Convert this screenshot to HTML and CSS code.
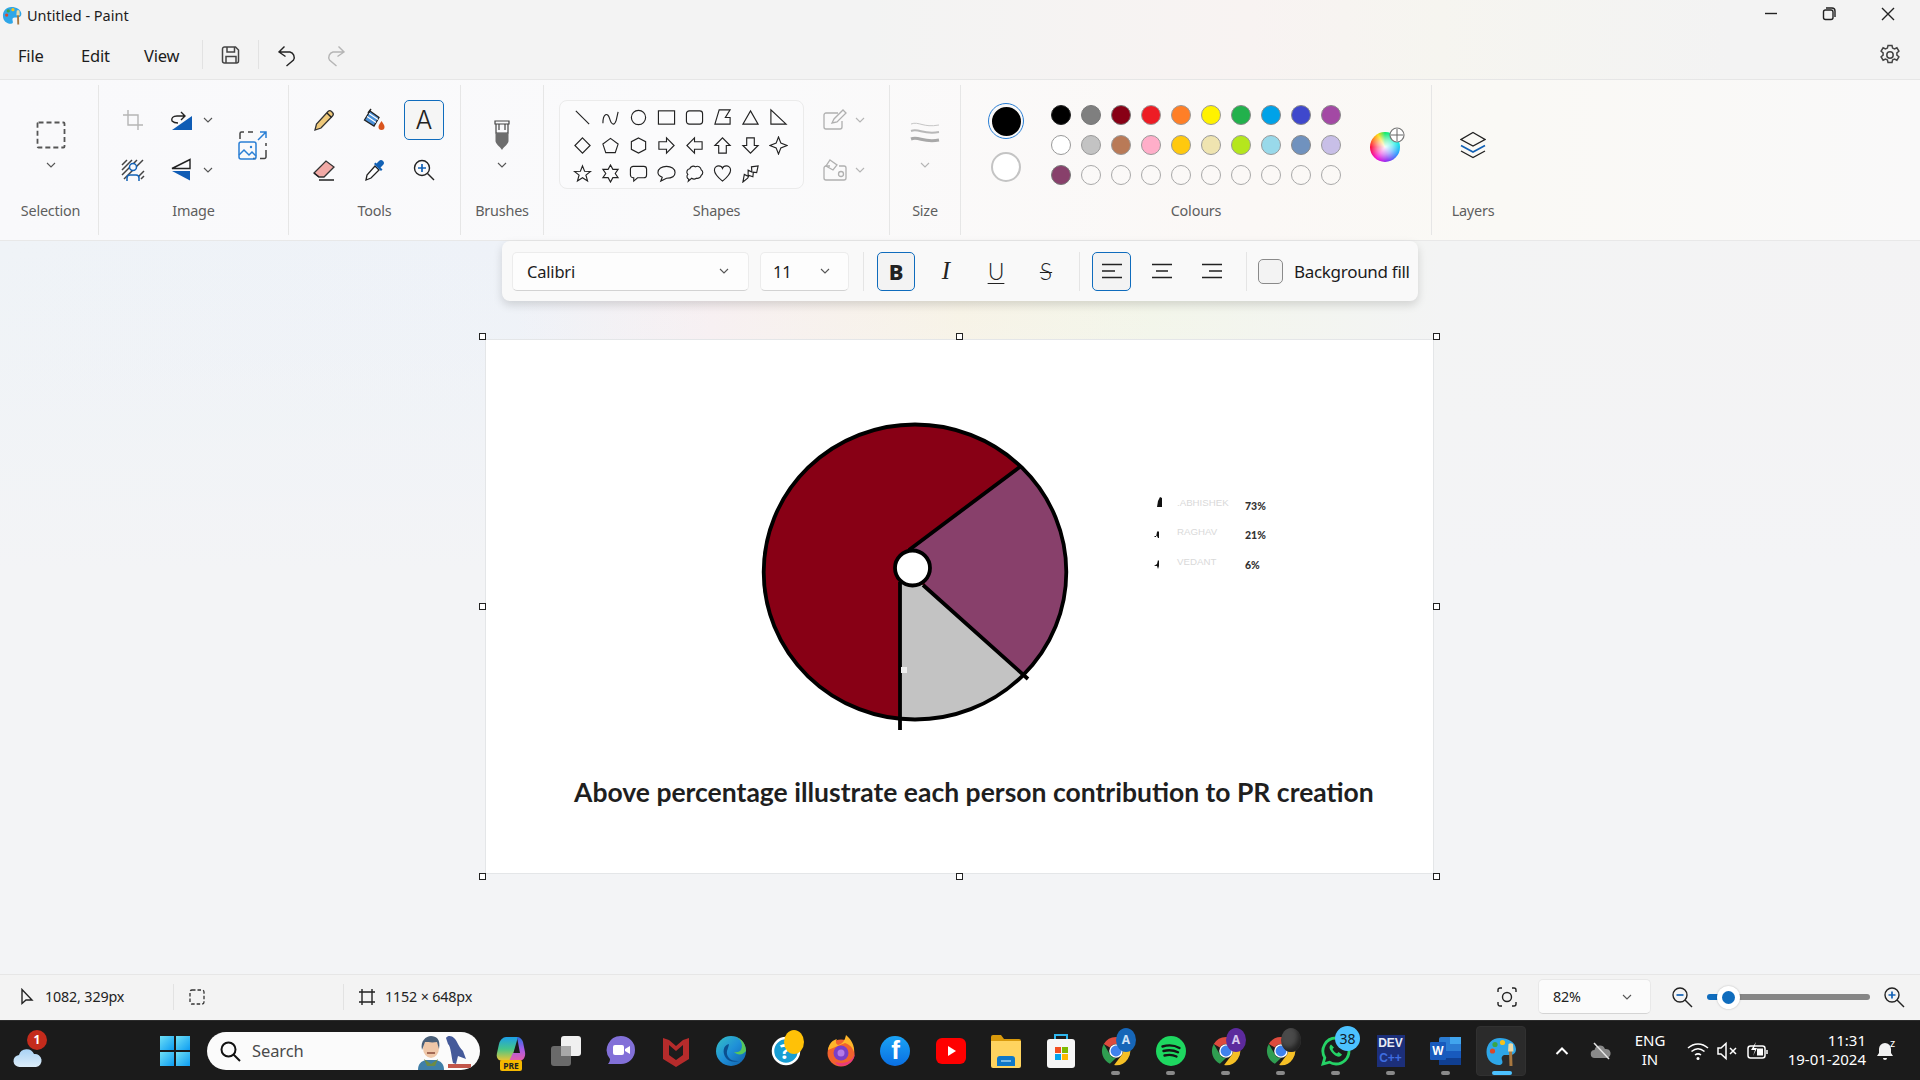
FILE: index.html
```html
<!DOCTYPE html>
<html lang="en">
<head>
<meta charset="utf-8">
<title>Untitled - Paint</title>
<link rel="stylesheet" href="styles.css">
</head>
<body>
<svg class="defs" width="0" height="0" aria-hidden="true">
  <defs>
    <symbol id="palette" viewBox="0 0 32 32">
      <path d="M15 3C7 3 1.500 9 1.500 17c0 8 6 13 12.500 13 3.500 0 4-2.500 3-5-1-3 .5-5 3.500-5h4c4 0 6.500-2 6.500-6C30.500 7 23 3 15 3z" fill="#2ea6e8"/>
      <circle cx="7.500" cy="16" r="2.600" fill="#d9482b"/>
      <circle cx="10" cy="9.500" r="2.600" fill="#3aa648"/>
      <circle cx="17.500" cy="7.500" r="2.600" fill="#f5c21b"/>
      <path d="M24 16h3l.5 15h-3z" fill="#a9783f"/>
      <path d="M23.500 9c1.500-1 3-1 4.500 0l.5 7.500h-5.500z" fill="#e9d9a8"/>
    </symbol>
    <symbol id="chrome" viewBox="0 0 32 32">
      <path d="M16 1a15 15 0 0 1 13 7.500H16a7.500 7.500 0 0 0-6.500 3.750L3 8.500A15 15 0 0 1 16 1z" fill="#dd4b3e"/>
      <path d="M3 8.500l6.500 11.250A7.500 7.500 0 0 0 16 23.500L9.500 29.500A15 15 0 0 1 3 8.500z" fill="#2f9e51"/>
      <path d="M29 8.500A15 15 0 0 1 14 31l8.500-11.250A7.500 7.500 0 0 0 22.500 12z" fill="#f6c026"/>
      <circle cx="16" cy="16" r="6.500" fill="#3f82ee" stroke="#fff" stroke-width="1.500"/>
    </symbol>
    <linearGradient id="winGrad" x1="0" y1="0" x2="1" y2="1">
      <stop offset="0" stop-color="#6fe0f5"/><stop offset="1" stop-color="#0d9cf2"/>
    </linearGradient>
    <linearGradient id="cloudGrad" x1="0" y1="0" x2="0" y2="1">
      <stop offset="0" stop-color="#a9d3f5"/><stop offset="1" stop-color="#dcecf8"/>
    </linearGradient>
    <linearGradient id="edgeGrad" x1="0" y1="0" x2="1" y2="1">
      <stop offset="0" stop-color="#35c1c4"/><stop offset=".5" stop-color="#1f8fd8"/><stop offset="1" stop-color="#0f5ea8"/>
    </linearGradient>
    <linearGradient id="copGradA" x1="0" y1="0" x2="0" y2="1">
      <stop offset="0" stop-color="#1c9fe8"/><stop offset=".5" stop-color="#45c58a"/><stop offset="1" stop-color="#f2c531"/>
    </linearGradient>
    <linearGradient id="copGradB" x1="0" y1="0" x2="0" y2="1">
      <stop offset="0" stop-color="#2a6fe0"/><stop offset=".5" stop-color="#a55be8"/><stop offset="1" stop-color="#e85fa8"/>
    </linearGradient>
  </defs>
</svg>

<div class="app">
  <header class="titlebar">
    <svg class="title-icon" width="20" height="20"><use href="#palette"/></svg>
    <span class="title-text">Untitled - Paint</span>
    <div class="winctrls">
      <svg class="winbtn" width="58" height="28" viewBox="0 0 58 28"><path d="M22 13.500h12" class="ln-dark"/></svg>
      <svg class="winbtn" width="58" height="28" viewBox="0 0 58 28"><rect x="22.500" y="10" width="9.500" height="9.500" rx="2" class="ln-dark"/><path d="M25 8h6a3 3 0 0 1 3 3v6" class="ln-dark"/></svg>
      <svg class="winbtn" width="58" height="28" viewBox="0 0 58 28"><path d="M23 8l12 12M35 8L23 20" class="ln-dark"/></svg>
    </div>
  </header>

  <nav class="menubar">
    <div class="menu-list">
      <span class="menu-item">File</span>
      <span class="menu-item">Edit</span>
      <span class="menu-item">View</span>
    </div>
    <span class="menu-sep"></span>
    <span class="menu-btn menu-btn-save">
      <svg width="22" height="22" viewBox="0 0 22 22"><path d="M4.500 3h11l3 3v11a2 2 0 0 1-2 2h-12a2 2 0 0 1-2-2V5a2 2 0 0 1 2-2z" class="ln-mid"/><path d="M7 3v5h7.500V3M6 19v-6.500h10V19" class="ln-mid"/></svg>
    </span>
    <span class="menu-sep"></span>
    <span class="menu-btn menu-btn-undo">
      <svg width="24" height="24" viewBox="0 0 24 24"><path d="M5 9h10a5.500 5.500 0 0 1 3.500 8l-7 6M9.500 3.500L4 9l6.500 4.500" class="ln-dark"/></svg>
    </span>
    <span class="menu-btn menu-btn-redo">
      <svg width="24" height="24" viewBox="0 0 24 24"><path d="M19 9H9a5.500 5.500 0 0 0-3.500 8l7 6M14.500 3.500L20 9l-6.500 4.500" class="ln-off"/></svg>
    </span>
    <svg class="gear" width="24" height="24" viewBox="0 0 24 24"><path d="M10 2.500h4l.6 2.600 1.900.9 2.400-1.200 2 3.400-2 1.700v2.200l2 1.700-2 3.400-2.400-1.200-1.900.9-.6 2.600h-4l-.6-2.600-1.900-.9-2.400 1.200-2-3.400 2-1.700V9.900l-2-1.700 2-3.400 2.400 1.200 1.900-.9z" class="ln-mid"/><circle cx="12" cy="12" r="3.200" class="ln-mid"/></svg>
  </nav>

  <section class="ribbon">
    <div class="group group-selection">
      <div class="body stack">
        <svg class="stack-icon" width="30" height="28" viewBox="0 0 30 28"><rect x="1.500" y="1.500" width="27" height="25" rx="1" class="ln-dash"/></svg>
        <svg class="chev stack-chev" width="12" height="8" viewBox="0 0 12 8"><path d="M2 2l4 4 4-4"/></svg>
      </div>
      <div class="label">Selection</div>
    </div>

    <div class="group group-image">
      <div class="body image-grid">
        <span class="cell"><svg width="24" height="24" viewBox="0 0 24 24"><path d="M7 2v15h15M2 7h15v15" class="ln-off"/></svg></span>
        <span class="cell-split">
          <svg width="26" height="24" viewBox="0 0 26 24"><path d="M2 22h20V8z" fill="#0f5cb5"/><path d="M2 13c-1-3 1-5 5-5h8M11 4l4 4-4 4M2 13c2 2 4 2 6 2" class="ln-dark"/></svg>
          <svg class="chev" width="12" height="8" viewBox="0 0 12 8"><path d="M2 2l4 4 4-4"/></svg>
        </span>
        <span class="cell cell-resize">
          <svg width="30" height="30" viewBox="0 0 30 30"><path d="M2 9V3.500A1.500 1.500 0 0 1 3.500 2H6M10 2h5M28 20v7a1.500 1.500 0 0 1-1.500 1.500H22M18 28.500h-3M28 16v-3" class="ln-dash2"/><rect x="1" y="12" width="17" height="17" rx="2" class="ln-blue"/><path d="M1 25l5-5 5 5 3-3 4 4" class="ln-blue"/><circle cx="13" cy="17" r="1.200" fill="#2a7fd5"/><path d="M20 10l8-8M22 2h6v6" class="ln-blue"/></svg>
        </span>
        <span class="cell"><svg width="24" height="24" viewBox="0 0 24 24"><path d="M1 7l5-5M1 12L11 2M1 17L16 2M3 21L22 2M15 21l8-8M20 21l3-3" class="ln-hatch"/><circle cx="12" cy="9" r="3.500" fill="#f9f9fb" stroke="#1261b5" stroke-width="1.500"/><path d="M6 23v-3a3 3 0 0 1 3-3h6a3 3 0 0 1 3 3v3" fill="#f9f9fb" stroke="#1261b5" stroke-width="1.500"/></svg></span>
        <span class="cell-split">
          <svg width="26" height="24" viewBox="0 0 26 24"><path d="M20 1.500V10.500H2z" class="ln-dark"/><path d="M20 22.500V13H2z" fill="#0f5cb5"/></svg>
          <svg class="chev" width="12" height="8" viewBox="0 0 12 8"><path d="M2 2l4 4 4-4"/></svg>
        </span>
      </div>
      <div class="label">Image</div>
    </div>

    <div class="group group-tools">
      <div class="body tool-grid">
        <span class="cell"><svg width="24" height="24" viewBox="0 0 24 24"><path d="M3 22l1.500-6L16 3.500a2.500 2.500 0 0 1 3.500 0l1 1a2.500 2.500 0 0 1 0 3.500L9 20z" fill="#efc97a" stroke="#333" stroke-width="1.300"/><path d="M15 5l4.500 4.500" class="ln-dark"/></svg></span>
        <span class="cell"><svg width="24" height="24" viewBox="0 0 24 24"><path d="M8 3l9 6.500-5 8.500-9.500-6z" fill="#4a90d8" stroke="#222" stroke-width="1.300"/><path d="M7 5.500l9 6M5 8.500l9 6" stroke="#fff" stroke-width="1.200"/><path d="M6 5L9 1" class="ln-dark"/><path d="M19.500 13c2 3 3 4.500 3 6a3 3 0 0 1-6 0c0-1.500 1-3 3-6z" fill="#d9541e"/></svg></span>
        <span class="cell"><span class="tool-active">A</span></span>
        <span class="cell"><svg width="24" height="24" viewBox="0 0 24 24"><path d="M2 15L14 3l8 6-10 10H7z" fill="#f2aaa6" stroke="#333" stroke-width="1.300"/><path d="M2 15l5 4M7 22h15" class="ln-dark"/></svg></span>
        <span class="cell"><svg width="24" height="24" viewBox="0 0 24 24"><path d="M4 22l1-5L13 8l4 4-8 8z" fill="#fff" stroke="#222" stroke-width="1.300"/><path d="M12 6l7 7 1.500-1.500-2-2 2.500-2.500a2.800 2.800 0 0 0-4-4l-2.500 2.500-1-1z" fill="#1261b5"/></svg></span>
        <span class="cell"><svg width="24" height="24" viewBox="0 0 24 24"><circle cx="10" cy="10" r="7.500" class="ln-dark"/><path d="M15.500 15.500L22 22" class="ln-dark"/><path d="M6 10h8M10 6v8" class="ln-blue2"/></svg></span>
      </div>
      <div class="label">Tools</div>
    </div>

    <div class="group group-brushes">
      <div class="body stack">
        <svg class="stack-icon-b" width="20" height="32" viewBox="0 0 20 32"><path d="M3 2h14v3H3zM4 5h12v9H4z" fill="#f9f9fb" stroke="#444" stroke-width="1.200"/><path d="M3.500 14h13v8c0 3-4 5-6.500 9-2.500-4-6.500-6-6.500-9z" fill="#6d6d6d"/><path d="M7 5v6M13 5v6" stroke="#444" stroke-width="1.200"/></svg>
        <svg class="chev stack-chev-b" width="12" height="8" viewBox="0 0 12 8"><path d="M2 2l4 4 4-4"/></svg>
      </div>
      <div class="label">Brushes</div>
    </div>

    <div class="group group-shapes">
      <div class="body shapes-row">
        <div class="shape-box">
          <svg class="shape" viewBox="0 0 20 20"><path d="M3 3l14 14"/></svg>
          <svg class="shape" viewBox="0 0 20 20"><path d="M2 16C2 6 7 4 9 11s5 8 7 2l2-9"/></svg>
          <svg class="shape" viewBox="0 0 20 20"><circle cx="10" cy="10" r="7.500"/></svg>
          <svg class="shape" viewBox="0 0 20 20"><rect x="1.500" y="3" width="17" height="14"/></svg>
          <svg class="shape" viewBox="0 0 20 20"><rect x="1.500" y="3" width="17" height="14" rx="3"/></svg>
          <svg class="shape" viewBox="0 0 20 20"><path d="M2 17L6.500 2H18l-5 8h5v7z"/></svg>
          <svg class="shape" viewBox="0 0 20 20"><path d="M10 3l8 14H2z"/></svg>
          <svg class="shape" viewBox="0 0 20 20"><path d="M2 2v15h16z"/></svg>
          <svg class="shape" viewBox="0 0 20 20"><path d="M10 2l8 8-8 8-8-8z"/></svg>
          <svg class="shape" viewBox="0 0 20 20"><path d="M10 2.500l8 6-3 9H5l-3-9z"/></svg>
          <svg class="shape" viewBox="0 0 20 20"><path d="M10 2l7.500 4v8L10 18l-7.500-4V6z"/></svg>
          <svg class="shape" viewBox="0 0 20 20"><path d="M2 6h8V2l8 8-8 8v-4H2z"/></svg>
          <svg class="shape" viewBox="0 0 20 20"><path d="M18 6h-8V2l-8 8 8 8v-4h8z"/></svg>
          <svg class="shape" viewBox="0 0 20 20"><path d="M6 18v-8H2l8-8 8 8h-4v8z"/></svg>
          <svg class="shape" viewBox="0 0 20 20"><path d="M6 2v8H2l8 8 8-8h-4V2z"/></svg>
          <svg class="shape" viewBox="0 0 20 20"><path d="M10 1l2.500 6.500L19 10l-6.500 2.500L10 19l-2.500-6.500L1 10l6.500-2.500z"/></svg>
          <svg class="shape" viewBox="0 0 20 20"><path d="M10 2l2.200 5.600 6.300.3-4.900 3.800 1.700 6.100L10 14.400l-5.300 3.400 1.700-6.100L1.500 7.900l6.300-.3z"/></svg>
          <svg class="shape" viewBox="0 0 20 20"><path d="M10 1l2.500 4.600H18L15 10l3 4.400h-5.500L10 19l-2.500-4.600H2L5 10 2 5.600h5.500z"/></svg>
          <svg class="shape" viewBox="0 0 20 20"><path d="M4.500 2.500h11a3 3 0 0 1 3 3v6a3 3 0 0 1-3 3H9L5 18v-3.500h-.5a3 3 0 0 1-3-3v-6a3 3 0 0 1 3-3z"/></svg>
          <svg class="shape" viewBox="0 0 20 20"><path d="M10 2.500c5 0 9 2.500 9 6.500s-4 6-9 6l-6 3 1.500-4C3 13 1 11.500 1 9c0-4 4-6.500 9-6.500z"/></svg>
          <svg class="shape" viewBox="0 0 20 20"><path d="M4 16a3 3 0 0 1-1-5 3.500 3.500 0 0 1 2-6 4 4 0 0 1 6-2 4 4 0 0 1 6 3 3.500 3.500 0 0 1 0 6 4 4 0 0 1-5 3 4 4 0 0 1-5 0l-3.500 3z"/></svg>
          <svg class="shape" viewBox="0 0 20 20"><path d="M10 18C4 13 1.500 10 1.500 6.500 1.500 3.500 4 2 6 2c2 0 3.500 1 4 2.500C10.500 3 12 2 14 2c2 0 4.500 1.500 4.500 4.500C18.500 10 16 13 10 18z"/></svg>
          <svg class="shape" viewBox="0 0 20 20"><path d="M2 19l1.500-8 4 2L7.500 6.500l4 2L11 3l7-1-1.500 7-3.500-.5-.5 5-4-1.500-1.500 3z"/></svg>
        </div>
        <div class="shape-opts">
          <span class="opt">
            <svg width="26" height="24" viewBox="0 0 26 24"><path d="M16 5H4a2 2 0 0 0-2 2v12a2 2 0 0 0 2 2h14a2 2 0 0 0 2-2v-6" class="ln-off2"/><path d="M10 15l2-4 9-9 3 3-9 9z" class="ln-off2"/></svg>
            <svg class="chev chev-off" width="12" height="8" viewBox="0 0 12 8"><path d="M2 2l4 4 4-4"/></svg>
          </span>
          <span class="opt">
            <svg width="26" height="24" viewBox="0 0 26 24"><path d="M8 8H4a2 2 0 0 0-2 2v10a2 2 0 0 0 2 2h18a2 2 0 0 0 2-2V10a2 2 0 0 0-2-2h-5" class="ln-off2"/><path d="M8 2l7 5-4 5-7-4z" class="ln-off2"/><circle cx="19" cy="16" r="2.500" class="ln-off2"/></svg>
            <svg class="chev chev-off" width="12" height="8" viewBox="0 0 12 8"><path d="M2 2l4 4 4-4"/></svg>
          </span>
        </div>
      </div>
      <div class="label">Shapes</div>
    </div>

    <div class="group group-size">
      <div class="body stack">
        <svg class="stack-icon-s" width="30" height="24" viewBox="0 0 30 24"><path d="M1 3c8-3 12 4 28 1" class="ln-s1"/><path d="M1 10c8-3 12 4 28 1" class="ln-s2"/><path d="M1 18c8-3 12 4 28 1" class="ln-s3"/></svg>
        <svg class="chev chev-off stack-chev-s" width="12" height="8" viewBox="0 0 12 8"><path d="M2 2l4 4 4-4"/></svg>
      </div>
      <div class="label">Size</div>
    </div>

    <div class="group group-colours">
      <div class="body colours-row">
        <div class="current-col">
          <span class="current-ring"><span class="current-black"></span></span>
          <span class="current-white"></span>
        </div>
        <div class="swatches">
          <span class="sw sw-black"></span><span class="sw sw-gray"></span><span class="sw sw-maroon"></span><span class="sw sw-red"></span><span class="sw sw-orange"></span><span class="sw sw-yellow"></span><span class="sw sw-green"></span><span class="sw sw-cyan"></span><span class="sw sw-indigo"></span><span class="sw sw-purple"></span>
          <span class="sw sw-white"></span><span class="sw sw-silver"></span><span class="sw sw-brown"></span><span class="sw sw-pink"></span><span class="sw sw-gold"></span><span class="sw sw-cream"></span><span class="sw sw-lime"></span><span class="sw sw-sky"></span><span class="sw sw-steel"></span><span class="sw sw-lav"></span>
          <span class="sw sw-plum"></span><span class="sw"></span><span class="sw"></span><span class="sw"></span><span class="sw"></span><span class="sw"></span><span class="sw"></span><span class="sw"></span><span class="sw"></span><span class="sw"></span>
        </div>
        <div class="wheel">
          <span class="wheel-disc"></span>
          <svg class="wheel-plus" width="16" height="16" viewBox="0 0 16 16"><circle cx="8" cy="8" r="7" fill="#fff" stroke="#777" stroke-width="1.200"/><path d="M8 2v12M2 8h12" stroke="#666" stroke-width="1"/></svg>
        </div>
      </div>
      <div class="label">Colours</div>
    </div>

    <div class="group group-layers">
      <div class="body center-body">
        <svg width="26" height="28" viewBox="0 0 26 28"><path d="M13 1.500L25 8.500 13 15 1 8.500z" class="ln-dark"/><path d="M1 14.500L13 21l12-6.500" class="ln-blue2"/><path d="M1 20L13 26.500 25 20" class="ln-dark"/></svg>
      </div>
      <div class="label">Layers</div>
    </div>
  </section>

  <main class="workspace">
    <div class="text-toolbar">
      <div class="dropdown dropdown-font"><span>Calibri</span><svg class="chev" width="12" height="8" viewBox="0 0 12 8"><path d="M2 2l4 4 4-4"/></svg></div>
      <div class="dropdown dropdown-size"><span>11</span><svg class="chev" width="12" height="8" viewBox="0 0 12 8"><path d="M2 2l4 4 4-4"/></svg></div>
      <span class="tb-sep tb-sep-a"></span>
      <span class="fmt fmt-on fmt-b">B</span>
      <span class="fmt fmt-i">I</span>
      <span class="fmt fmt-u">U</span>
      <span class="fmt fmt-s">S</span>
      <span class="tb-sep tb-sep-b"></span>
      <span class="fmt fmt-on fmt-al">
        <svg width="20" height="18" viewBox="0 0 20 18"><path d="M0 2.500h20M0 9h13M0 15.500h20" class="ln-dark"/></svg>
      </span>
      <span class="fmt fmt-al">
        <svg width="20" height="18" viewBox="0 0 20 18"><path d="M0 2.500h20M4 9h12M0 15.500h20" class="ln-dark"/></svg>
      </span>
      <span class="fmt fmt-al">
        <svg width="20" height="18" viewBox="0 0 20 18"><path d="M0 2.500h20M7 9h13M0 15.500h20" class="ln-dark"/></svg>
      </span>
      <span class="tb-sep tb-sep-c"></span>
      <span class="checkbox"></span>
      <span class="tb-label">Background fill</span>
    </div>

    <div class="canvas">
      <svg class="artwork" width="947" height="533" viewBox="486 340 947 533">
        <ellipse cx="915" cy="572" rx="151.300" ry="147.500" fill="#880015"/>
        <path d="M909 552L1020 466A151.300 147.500 0 0 1 1025 675L926 586z" fill="#88406b"/>
        <path d="M900 575V719A151.300 147.500 0 0 0 1025 675L923 585z" fill="#c3c3c3"/>
        <ellipse cx="915" cy="572" rx="151.300" ry="147.500" class="art-line"/>
        <path d="M909 550L1021 466M923 585L1028 679M900 582V730" class="art-line"/>
        <circle cx="912.500" cy="568" r="17.500" fill="#fff" class="art-line-3"/>
        <rect x="901" y="667" width="6" height="6" fill="#eeeeee"/>
        <path d="M1157 507l1-6 2-4 2 1v9z" fill="#111"/>
        <path d="M1154 537h2l1-5 1-1 1 1v6h-1l-1-2h-2z" fill="#111"/>
        <path d="M1154 566l3-2 1-4 1 1v5l-1 3-1-3z" fill="#111"/>
      </svg>
      <span class="legend-name legend-a">.ABHISHEK</span><span class="legend-val legend-va">73%</span>
      <span class="legend-name legend-b">RAGHAV</span><span class="legend-val legend-vb">21%</span>
      <span class="legend-name legend-c">VEDANT</span><span class="legend-val legend-vc">6%</span>
      <span class="art-heading">Above percentage illustrate each person contribution to PR creation</span>
      <span class="handle h-tl"></span><span class="handle h-tc"></span><span class="handle h-tr"></span>
      <span class="handle h-ml"></span><span class="handle h-mr"></span>
      <span class="handle h-bl"></span><span class="handle h-bc"></span><span class="handle h-br"></span>
    </div>
  </main>

  <footer class="statusbar">
    <div class="seg seg-pos">
      <svg width="16" height="18" viewBox="0 0 16 18"><path d="M3 1.500v14l4-3.500 6 0z" class="ln-dark"/></svg>
      <span>1082, 329px</span>
    </div>
    <div class="seg seg-sel">
      <svg width="16" height="16" viewBox="0 0 16 16"><rect x="1" y="1" width="14" height="14" rx="2" class="ln-dash3"/></svg>
    </div>
    <div class="seg seg-size">
      <svg width="16" height="16" viewBox="0 0 16 16"><path d="M3 0v16M13 0v16M0 3h16M0 13h16" class="ln-dark"/></svg>
      <span>1152 × 648px</span>
    </div>
    <div class="status-right">
      <svg class="fit" width="20" height="20" viewBox="0 0 20 20"><path d="M1 5V3a2 2 0 0 1 2-2h2M15 1h2a2 2 0 0 1 2 2v2M19 15v2a2 2 0 0 1-2 2h-2M5 19H3a2 2 0 0 1-2-2v-2" class="ln-dark"/><circle cx="10" cy="10" r="4.500" class="ln-dark"/></svg>
      <div class="zoom-select"><span>82%</span><svg class="chev" width="12" height="8" viewBox="0 0 12 8"><path d="M2 2l4 4 4-4"/></svg></div>
      <svg class="zoom-ic" width="22" height="22" viewBox="0 0 22 22"><circle cx="9" cy="9" r="7" class="ln-dark"/><path d="M14 14l7 7" class="ln-dark"/><path d="M5.500 9h7" class="ln-blue2"/></svg>
      <div class="slider"><span class="slider-fill"></span><span class="slider-rest"></span><span class="slider-thumb"><span class="slider-dot"></span></span></div>
      <svg class="zoom-ic" width="22" height="22" viewBox="0 0 22 22"><circle cx="9" cy="9" r="7" class="ln-dark"/><path d="M14 14l7 7" class="ln-dark"/><path d="M5.500 9h7M9 5.500v7" class="ln-blue2"/></svg>
    </div>
  </footer>

  <div class="taskbar">
    <div class="tb-weather">
      <svg width="30" height="22" viewBox="0 0 30 22"><path d="M7 21a6 6 0 0 1-1-12 8 8 0 0 1 15-1 6.500 6.500 0 0 1 2 13z" fill="url(#cloudGrad)"/></svg>
      <span class="badge-red">1</span>
    </div>
    <span class="tb-cell tb-start">
      <svg width="30" height="30" viewBox="0 0 30 30"><rect x="0" y="0" width="14" height="14" fill="url(#winGrad)"/><rect x="16" y="0" width="14" height="14" fill="url(#winGrad)"/><rect x="0" y="16" width="14" height="14" fill="url(#winGrad)"/><rect x="16" y="16" width="14" height="14" fill="url(#winGrad)"/></svg>
    </span>
    <div class="search">
      <svg width="22" height="22" viewBox="0 0 22 22"><circle cx="9.500" cy="9.500" r="7" class="ln-black"/><path d="M14.500 14.500L21 21" class="ln-black"/></svg>
      <span class="search-text">Search</span>
      <svg class="search-art" width="60" height="38" viewBox="0 0 60 38"><path d="M4 38c0-6 3-9 8-10h10c5 1 8 4 8 10z" fill="#3f7fa8"/><path d="M10 27l7 5 7-5-3 7h-8z" fill="#6d8b45"/><ellipse cx="17" cy="16" rx="8" ry="10" fill="#efc7a8"/><path d="M8 18c-2-9 4-14 9-14s10 3 8 13l-2-7c-5 1-9 0-12 0z" fill="#4a5f78"/><path d="M13 21h8" stroke="#8a4a3a" stroke-width="1.500"/><path d="M32 6c2-3 6-2 8 0 3 2 4 8 9 13l3 8-8-3-2 8-3-1c-2-8-2-16-5-19z" fill="#455a9a"/><path d="M34 32h23v4H34z" fill="#c2564a"/></svg>
    </div>
    <span class="tb-cell tb-copilot">
      <svg width="30" height="30" viewBox="0 0 30 30"><path d="M10 1h12l-7 24H7C2 25 0 22 1 17l2-9c1-4 4-7 7-7z" fill="url(#copGradA)"/><path d="M21 1c3 0 5 2 6 5l2 10c1 5-2 9-6 9H13l4-8h7z" fill="url(#copGradB)"/></svg>
      <span class="pre-badge">PRE</span>
    </span>
    <span class="tb-cell">
      <svg width="32" height="32" viewBox="0 0 32 32"><rect x="1" y="11" width="20" height="20" rx="3" fill="#6a6a6a"/><rect x="11" y="1" width="20" height="20" rx="3" fill="#f0f0f0"/><rect x="11" y="11" width="10" height="10" fill="#a8a8a8"/></svg>
    </span>
    <span class="tb-cell">
      <svg width="30" height="32" viewBox="0 0 30 32"><path d="M15 1a14 14 0 0 1 0 28H2c1-1 2-3 2-5A14 14 0 0 1 15 1z" fill="#8270d8"/><rect x="7" y="10" width="11" height="10" rx="2" fill="#fff"/><path d="M19 14l5-3v8l-5-3z" fill="#fff"/></svg>
    </span>
    <span class="tb-cell">
      <svg width="28" height="32" viewBox="0 0 28 32"><path d="M1 3l6 2 7 6 7-6 6-2v21l-13 8-13-8z" fill="#b52b2b"/><path d="M7 10v10l7 5 7-5V10l-7 6z" fill="#1c1c1c"/></svg>
    </span>
    <span class="tb-cell">
      <svg width="30" height="30" viewBox="0 0 30 30"><circle cx="15" cy="15" r="15" fill="url(#edgeGrad)"/><path d="M30 15c0-8-6-15-15-15C24 0 28 8 25 14c-2 3-7 2-7 2 3 3 8 4 12-1z" fill="#58c85a"/><path d="M13 8c-6 1-7 9-3 14 2 3 8 5 13 3-9 1-13-5-12-10 1-3 2-6 2-7z" fill="#0b4f8f"/></svg>
    </span>
    <span class="tb-cell tb-help">
      <svg width="30" height="30" viewBox="0 0 30 30"><circle cx="15" cy="15" r="13" fill="#189ed4" stroke="#fff" stroke-width="2.500"/></svg>
      <span class="help-q">?</span>
      <span class="help-dot"></span>
    </span>
    <span class="tb-cell">
      <svg width="30" height="32" viewBox="0 0 30 32"><circle cx="15" cy="18" r="13.500" fill="#f2622e"/><path d="M2 15c1-7 5-10 9-11-2 3-1 5 1 6 5-1 7-5 8-10 5 4 9 11 8 17-2-6-6-8-9-9z" fill="#ffb52a"/><path d="M15 31c8 0 14-6 14-13-2 8-10 12-20 9 2 3 4 4 6 4z" fill="#ea3a7a"/><circle cx="15" cy="18" r="7.500" fill="#7a3fc8"/><circle cx="15" cy="18" r="3.500" fill="#b47ae8"/></svg>
    </span>
    <span class="tb-cell tb-fb">f</span>
    <span class="tb-cell">
      <svg width="30" height="26" viewBox="0 0 30 26"><rect width="30" height="26" rx="6" fill="#f00"/><path d="M12 8l8 5-8 5z" fill="#fff"/></svg>
    </span>
    <span class="tb-cell">
      <svg width="30" height="34" viewBox="0 0 30 34"><path d="M0 3a2 2 0 0 1 2-2h8l3 4h15a2 2 0 0 1 2 2v4H0z" fill="#d99a0c"/><path d="M0 7h30v25a2 2 0 0 1-2 2H2a2 2 0 0 1-2-2z" fill="#ffd45f"/><path d="M6 32v-7a3 3 0 0 1 3-3h12a3 3 0 0 1 3 3v7z" fill="#0f78c8"/><path d="M10 27h10" stroke="#9cd0f0" stroke-width="1.500"/></svg>
    </span>
    <span class="tb-cell">
      <svg width="30" height="34" viewBox="0 0 30 34"><path d="M9 8V1h12v7" fill="none" stroke="#2fb7ee" stroke-width="2"/><rect x="1" y="5" width="28" height="29" rx="3" fill="#f6f6f6"/><rect x="9" y="13" width="6" height="6" fill="#f25022"/><rect x="16" y="13" width="6" height="6" fill="#7fba00"/><rect x="9" y="20" width="6" height="6" fill="#00a4ef"/><rect x="16" y="20" width="6" height="6" fill="#ffb900"/></svg>
    </span>
    <span class="tb-cell tb-dot tb-chrome">
      <svg width="30" height="30"><use href="#chrome"/></svg>
      <span class="app-badge badge-blue">A</span>
    </span>
    <span class="tb-cell tb-dot">
      <svg width="30" height="30" viewBox="0 0 30 30"><circle cx="15" cy="15" r="15" fill="#1ed760"/><path d="M6.500 10.500c6-1.800 12-1.300 17 1.500M7.500 15c5-1.300 10-1 14.500 1.300M8.500 19.500c4-1 8.500-.8 12 1" class="ln-spot"/></svg>
    </span>
    <span class="tb-cell tb-dot tb-chrome">
      <svg width="30" height="30"><use href="#chrome"/></svg>
      <span class="app-badge badge-purple">A</span>
    </span>
    <span class="tb-cell tb-dot tb-chrome">
      <svg width="30" height="30"><use href="#chrome"/></svg>
      <span class="app-badge badge-photo"></span>
    </span>
    <span class="tb-cell tb-dot tb-wa">
      <svg width="30" height="30" viewBox="0 0 30 30"><path d="M15 2a13 13 0 0 1 0 26c-2.500 0-4.500-.5-6.500-1.800L2 28l1.800-6.300A13 13 0 0 1 15 2z" fill="#1c1c1c" stroke="#25d366" stroke-width="2.800"/><path d="M10 8.500c-1.500 1-2 3-1 5 1.500 3 4.500 6 7.500 7 2 .5 4-.5 4.500-2l-3.500-2.500-1.500 1.500c-2-1-3.500-2.500-4.500-4.500l1.500-1.500z" fill="#25d366"/></svg>
      <span class="app-badge badge-wa">38</span>
    </span>
    <span class="tb-cell tb-dot">
      <span class="dev-icon"><span class="dev-top">DEV</span><span class="dev-bot">C++</span></span>
    </span>
    <span class="tb-cell tb-dot tb-word">
      <svg width="30" height="30" viewBox="0 0 30 30"><rect x="8" y="1" width="22" height="28" rx="2" fill="#2b7cd3"/><rect x="19" y="1" width="11" height="7" fill="#41a5ee"/><rect x="8" y="15" width="22" height="7" fill="#185abd"/><rect x="8" y="22" width="22" height="7" fill="#103f91"/></svg>
      <span class="word-w">W</span>
    </span>
    <span class="tb-cell tb-paint">
      <svg width="32" height="32"><use href="#palette"/></svg>
      <span class="paint-bar"></span>
    </span>

    <div class="tray">
      <span class="tray-cell tray-chev"><svg width="14" height="10" viewBox="0 0 14 10"><path d="M1.500 8L7 2.500 12.500 8" class="ln-white2"/></svg></span>
      <span class="tray-cell tray-cloud"><svg width="22" height="20" viewBox="0 0 22 20"><path d="M5 17a4 4 0 0 1-.5-8 5.500 5.500 0 0 1 10.500-1 4.500 4.500 0 0 1 2 9z" fill="#8a8a8a"/><path d="M4 2l15 16" stroke="#e8e8e8" stroke-width="1.500"/></svg></span>
      <span class="tray-lang">ENG<br>IN</span>
      <span class="tray-cell tray-ic"><svg width="22" height="20" viewBox="0 0 22 20"><path d="M1 7c6-5.500 14-5.500 20 0M4.500 10.500c4-3.500 9-3.500 13 0M8 14c2-1.500 4-1.500 6 0" class="ln-white"/><circle cx="11" cy="17.500" r="1.500" fill="#fff"/></svg></span>
      <span class="tray-cell tray-ic"><svg width="22" height="20" viewBox="0 0 22 20"><path d="M1 7v6h3l5 4.500v-15L4 7z" class="ln-white"/><path d="M13 7l6 6M19 7l-6 6" class="ln-white"/></svg></span>
      <span class="tray-cell tray-ic"><svg width="22" height="20" viewBox="0 0 22 20"><rect x="1" y="5" width="17" height="12" rx="2.500" class="ln-white"/><path d="M20 9v4" class="ln-white"/><path d="M9 1L4 9h4l-2 6 4-8H7z" fill="#fff"/><rect x="10" y="7.500" width="6" height="7" fill="#fff"/></svg></span>
      <span class="tray-clock">11:31<br>19-01-2024</span>
      <span class="tray-cell tray-bell"><svg width="20" height="22" viewBox="0 0 20 22"><path d="M10 3a6 6 0 0 1 6 6v4l2 3H2l2-3V9a6 6 0 0 1 6-6z" fill="#f2f2f2"/><path d="M8 18h4a2 2 0 0 1-4 0z" fill="#f2f2f2"/></svg><span class="bell-z">z</span></span>
    </div>
  </div>
</div>
</body>
</html>
```
FILE: styles.css
```css
* { box-sizing: border-box; }
html, body { margin: 0; padding: 0; }
body { width: 1920px; height: 1080px; overflow: hidden; font-family: "Noto Sans", "Open Sans", sans-serif; color: #1c1c1c; background: #f3f3f3; }
.defs { position: absolute; }
svg { display: block; flex: none; }

.ln-dark { fill: none; stroke: #222; stroke-width: 1.400; }
.ln-mid { fill: none; stroke: #444; stroke-width: 1.500; }
.ln-off { fill: none; stroke: #b5b5b5; stroke-width: 1.400; }
.ln-off2 { fill: none; stroke: #b0b0b0; stroke-width: 1.300; }
.ln-dash { fill: none; stroke: #555; stroke-width: 1.800; stroke-dasharray: 5 3; }
.ln-dash2 { fill: none; stroke: #444; stroke-width: 1.500; }
.ln-dash3 { fill: none; stroke: #333; stroke-width: 1.300; stroke-dasharray: 3.500 2; }
.ln-blue { fill: none; stroke: #2a7fd5; stroke-width: 1.500; }
.ln-blue2 { fill: none; stroke: #1261b5; stroke-width: 1.700; }
.ln-hatch { fill: none; stroke: #444; stroke-width: 1.500; }
.ln-white { fill: none; stroke: #fff; stroke-width: 1.500; }
.ln-white2 { fill: none; stroke: #fff; stroke-width: 2; }
.ln-black { fill: none; stroke: #111; stroke-width: 2; }
.ln-spot { fill: none; stroke: #141414; stroke-width: 2.400; stroke-linecap: round; }
.ln-s1 { fill: none; stroke: #c6c6c6; stroke-width: 1; }
.ln-s2 { fill: none; stroke: #b8b8b8; stroke-width: 2; }
.ln-s3 { fill: none; stroke: #a8a8a8; stroke-width: 3; }
.chev path { fill: none; stroke: #555; stroke-width: 1.100; }
.chev-off path { stroke: #b5b5b5; }

.app { width: 1920px; height: 1080px; display: flex; flex-direction: column; }

/* title + menu */
.titlebar { height: 34px; display: flex; align-items: flex-start; padding: 5px 0 0 2px; background: linear-gradient(90deg, #f3f3f3 0%, #f3f3f3 45%, #f8f3f2 65%, #f6f5f0 75%, #f3f3f3 90%); }
.title-icon { margin-right: 5px; }
.title-text { font-size: 14.500px; line-height: 20px; letter-spacing: 0; color: #1c1c1c; }
.winctrls { margin-left: auto; margin-right: 3px; margin-top: -5px; display: flex; }
.menubar { height: 46px; display: flex; align-items: center; padding: 0 0 4px 18px; border-bottom: 1px solid #e6e6e6; background: linear-gradient(90deg, #f3f3f3 0%, #f3f3f3 45%, #f8f3f2 65%, #f6f5f0 75%, #f3f3f3 90%); }
.menu-list { display: flex; gap: 15px; padding-top: 2px; }
.menu-item { width: 48px; font-size: 16.500px; line-height: 24px; letter-spacing: -.2px; color: #1c1c1c; }
.menu-sep { width: 1px; height: 29px; background: #e2e2e2; margin-left: 10px; }
.menu-btn-save + .menu-sep { margin-left: 0; }
.menu-btn { width: 50px; height: 36px; display: flex; align-items: center; justify-content: center; }
.menu-btn-save { width: 55px; }
.menu-btn-undo { margin-left: 3px; }
.menu-btn-redo { margin-left: -1px; }
.gear { margin-left: auto; margin-right: 18px; }

/* ribbon */
.ribbon { height: 161px; display: flex; align-items: flex-start; padding-top: 5px; border-bottom: 1px solid #e8e8e8; background: linear-gradient(90deg, #f9f9fb 0%, #fafafb 40%, #fbf8f6 65%, #faf9f5 78%, #f9f9f9 100%); }
.group { height: 150px; display: flex; flex-direction: column; border-right: 1px solid #e6e6e6; }
.body { height: 100px; margin-top: 10px; }
.label { margin-top: 5px; height: 22px; line-height: 22px; font-size: 14.400px; letter-spacing: -.2px; text-align: center; color: #5e5e5e; }
.group-selection { width: 99px; padding-left: 3px; }
.group-image { width: 190px; }
.group-tools { width: 172px; }
.group-brushes { width: 83px; }
.group-shapes { width: 346px; }
.group-size { width: 71px; }
.group-colours { width: 471px; }
.group-layers { width: 82px; border-right: 0; }
.stack { display: flex; flex-direction: column; align-items: center; }
.stack-icon { margin-top: 26px; }
.stack-chev { margin-top: 12px; }
.stack-icon-b { margin-top: 24px; }
.stack-chev-b { margin-top: 10px; }
.stack-icon-s { margin-top: 26px; }
.stack-chev-s { margin-top: 16px; }
.cell { height: 50px; display: flex; align-items: center; justify-content: center; }
.image-grid { display: grid; grid-template-columns: 50px 70px 50px; grid-auto-rows: 50px; padding-left: 9px; }
.cell-split { display: flex; align-items: center; padding-left: 12px; gap: 6px; }
.cell-resize { grid-column: 3; grid-row: 1 / span 2; height: 100px; }
.tool-grid { display: grid; grid-template-columns: repeat(3, 50px); grid-auto-rows: 50px; padding-left: 10px; }
.tool-active { width: 40px; height: 40px; display: flex; align-items: center; justify-content: center; font-family: "Inter", sans-serif; font-weight: 300; font-size: 25px; color: #222; border: 1.500px solid #0f6cbd; border-radius: 5px; background: #f5f5f5; }
.shapes-row { display: flex; align-items: flex-start; padding-left: 15px; }
.shape-box { width: 245px; height: 89px; margin-top: 5px; padding: 2px 0 0 8px; display: grid; grid-template-columns: repeat(8, 28px); grid-auto-rows: 28px; align-items: center; justify-items: center; border: 1px solid #ebebeb; border-radius: 8px; background: #fbfbfc; }
.shape { width: 19px; height: 19px; fill: none; stroke: #222; stroke-width: 1.200; }
.shape-opts { margin-left: 18px; }
.opt { height: 50px; display: flex; align-items: center; gap: 6px; }
.colours-row { display: flex; align-items: flex-start; padding-left: 27px; }
.current-col { width: 36px; display: flex; flex-direction: column; align-items: center; }
.current-ring { margin-top: 8px; width: 36px; height: 36px; border-radius: 50%; border: 1.500px solid #2a7fd5; display: flex; align-items: center; justify-content: center; }
.current-black { width: 29px; height: 29px; border-radius: 50%; background: #000; }
.current-white { margin-top: 13px; width: 30px; height: 30px; border-radius: 50%; background: #fff; border: 2px solid #c4c4c4; }
.swatches { margin: 5px 0 0 22px; display: grid; grid-template-columns: repeat(10, 30px); grid-auto-rows: 30px; align-items: center; justify-items: center; }
.sw { width: 20px; height: 20px; border-radius: 50%; border: 1px solid #a9a9a9; }
.sw-black { background: #000; border-color: #222; }
.sw-gray { background: #7f7f7f; border-color: #777; }
.sw-maroon { background: #880015; border-color: #777; }
.sw-red { background: #ed1c24; border-color: #999; }
.sw-orange { background: #ff7f27; border-color: #999; }
.sw-yellow { background: #fff200; border-color: #999; }
.sw-green { background: #22b14c; border-color: #888; }
.sw-cyan { background: #00a2e8; border-color: #888; }
.sw-indigo { background: #3f48cc; border-color: #888; }
.sw-purple { background: #a349a4; border-color: #888; }
.sw-white { background: #fff; border-color: #999; }
.sw-silver { background: #c3c3c3; border-color: #999; }
.sw-brown { background: #b97a57; border-color: #999; }
.sw-pink { background: #ffaec9; border-color: #999; }
.sw-gold { background: #ffc90e; border-color: #999; }
.sw-cream { background: #efe4b0; border-color: #999; }
.sw-lime { background: #b5e61d; border-color: #999; }
.sw-sky { background: #99d9ea; border-color: #999; }
.sw-steel { background: #7092be; border-color: #888; }
.sw-lav { background: #c8bfe7; border-color: #999; }
.sw-plum { background: #88406b; border-color: #777; }
.wheel { position: relative; margin: 37px 0 0 24px; width: 30px; height: 30px; }
.wheel-disc { display: block; width: 30px; height: 30px; border-radius: 50%; background: radial-gradient(circle, rgba(255,255,255,.95) 0%, rgba(255,255,255,.55) 35%, rgba(255,255,255,0) 72%), conic-gradient(#00e860 0deg, #00f0e0 70deg, #2090ff 120deg, #8020f0 170deg, #f000d0 215deg, #ff0030 270deg, #ffd800 330deg, #00e860 360deg); }
.wheel-plus { position: absolute; left: 19px; top: -5px; }
.center-body { display: flex; align-items: center; justify-content: center; }

/* workspace */
.workspace { position: relative; height: 733px; background: linear-gradient(180deg, rgba(243,244,246,0) 0%, rgba(243,244,246,.2) 12%, #f3f4f6 45%), linear-gradient(90deg, #eff3f7 0%, #eef2f8 27%, #f8eff1 37%, #f8f3e4 50%, #f3f6e8 60%, #f3f4f4 75%, #f3f3f4 100%); padding-top: 99px; }
.text-toolbar { position: absolute; left: 502px; top: 0; width: 916px; height: 60px; padding-left: 10px; display: flex; align-items: center; background: #f9f9f9; border-radius: 8px; box-shadow: 0 4px 10px rgba(0,0,0,.14); z-index: 2; }
.dropdown { height: 39px; display: flex; align-items: center; justify-content: space-between; background: #fdfdfd; border: 1px solid #ececec; border-bottom-color: #d2d2d2; border-radius: 5px; font-size: 16.500px; letter-spacing: -.2px; }
.dropdown-font { width: 237px; padding: 0 18px 0 14px; }
.dropdown-size { width: 89px; margin-left: 11px; padding: 0 17px 0 12px; }
.tb-sep { width: 1px; height: 39px; background: #e5e5e5; }
.tb-sep-a { margin: 0 13px 0 14px; }
.tb-sep-b { margin: 0 12px 0 14px; }
.tb-sep-c { margin: 0 11px 0 15px; }
.fmt { width: 38px; height: 39px; display: flex; align-items: center; justify-content: center; border-radius: 5px; font-size: 21px; color: #222; }
.fmt-i, .fmt-u, .fmt-s { margin-left: 12px; }
.fmt-on { border: 1.500px solid #0f6cbd; background: #f3f3f3; }
.fmt-b { font-weight: 800; font-size: 22px; }
.fmt-i { font-family: "Liberation Serif", serif; font-style: italic; font-size: 25px; }
.fmt-u { font-weight: 300; font-family: "Lato", sans-serif; font-size: 23px; text-decoration: underline; text-decoration-thickness: 1px; text-underline-offset: 3px; }
.fmt-s { font-weight: 300; font-family: "Lato", sans-serif; font-size: 23px; text-decoration: line-through; text-decoration-thickness: 1px; }
.fmt-al { width: 39px; margin-left: 11px; }
.fmt-on.fmt-al { margin-left: 0; }
.checkbox { width: 25px; height: 25px; border: 1.500px solid #8a8a8a; border-radius: 5px; background: #f3f3f3; }
.tb-label { margin-left: 11px; font-size: 17px; letter-spacing: -.3px; white-space: nowrap; }

.canvas { position: relative; width: 947px; height: 533px; margin-left: 486px; background: #fff; box-shadow: 0 0 0 1px #e4e6e8; }
.artwork { position: absolute; left: 0; top: 0; }
.art-line { fill: none; stroke: #000; stroke-width: 3.800; }
.art-line-3 { stroke: #000; stroke-width: 3.800; }
.legend-name, .legend-val, .art-heading { position: absolute; white-space: nowrap; }
.legend-name { font-size: 9.700px; line-height: 12px; color: #d9d9d9; font-family: "Liberation Sans", sans-serif; }
.legend-val { font-size: 10.500px; line-height: 12px; font-weight: 900; color: #333; font-family: "Lato", sans-serif; }
.legend-a { left: 691px; top: 157px; }
.legend-b { left: 691px; top: 186px; }
.legend-c { left: 691px; top: 216px; }
.legend-va { left: 759px; top: 160px; }
.legend-vb { left: 759px; top: 189px; }
.legend-vc { left: 759px; top: 219px; }
.art-heading { left: 88px; top: 435px; font-family: "Lato", "Liberation Sans", sans-serif; font-weight: 700; font-size: 26.500px; line-height: 34px; color: #1f1f1f; }
.handle { position: absolute; width: 7px; height: 7px; background: #fff; border: 1.500px solid #222; }
.h-tl { left: -7px; top: -7px; }
.h-tc { left: 470px; top: -7px; }
.h-tr { left: 947px; top: -7px; }
.h-ml { left: -7px; top: 263px; }
.h-mr { left: 947px; top: 263px; }
.h-bl { left: -7px; top: 533px; }
.h-bc { left: 470px; top: 533px; }
.h-br { left: 947px; top: 533px; }

/* status */
.statusbar { height: 46px; display: flex; align-items: center; padding-bottom: 2px; background: #f3f3f3; border-top: 1px solid #e6e6e6; font-size: 14.300px; letter-spacing: -.15px; color: #222; }
.seg { height: 26px; display: flex; align-items: center; border-right: 1px solid #e2e2e2; }
.seg-pos { width: 174px; padding-left: 19px; }
.seg-pos span { margin-left: 10px; }
.seg-sel { width: 170px; padding-left: 15px; }
.seg-size { padding-left: 15px; border-right: 0; }
.seg-size span { margin-left: 10px; }
.status-right { margin-left: auto; padding-right: 15px; display: flex; align-items: center; }
.fit { margin-right: 21px; }
.zoom-select { width: 113px; height: 35px; margin-right: 20px; padding: 0 17px 0 14px; display: flex; align-items: center; justify-content: space-between; background: #fbfbfb; border: 1px solid #e8e8e8; border-bottom-color: #d4d4d4; border-radius: 5px; }
.slider { position: relative; width: 163px; height: 24px; margin: 0 13px 0 14px; }
.slider-fill { position: absolute; left: 0; top: 9px; width: 14px; height: 6px; border-radius: 3px; background: #0f6cbd; }
.slider-rest { position: absolute; left: 24px; right: 0; top: 9px; height: 6px; border-radius: 3px; background: #868686; }
.slider-thumb { position: absolute; left: 10px; top: 1px; width: 23px; height: 23px; border-radius: 50%; background: #fff; box-shadow: 0 0 2px rgba(0,0,0,.25); display: flex; align-items: center; justify-content: center; }
.slider-dot { width: 13px; height: 13px; border-radius: 50%; background: #0f6cbd; }

/* taskbar */
.taskbar { height: 60px; display: flex; align-items: center; background: #1b1b1b; color: #fff; border-top: 1px solid #2c2c2c; }
.tb-weather { position: relative; width: 56px; height: 60px; margin-right: 91px; padding: 25px 0 0 13px; }
.badge-red { position: absolute; left: 27px; top: 9px; width: 20px; height: 20px; border-radius: 50%; background: #c42b1c; font-size: 12px; font-weight: 700; line-height: 20px; text-align: center; color: #fff; }
.tb-cell { position: relative; width: 55px; height: 60px; display: flex; align-items: center; justify-content: center; }
.search { width: 273px; height: 38px; margin: 0 3px 0 5px; padding: 0 0 0 12px; display: flex; align-items: center; background: #fbfbfb; border-radius: 19px; overflow: hidden; }
.search-text { margin-left: 11px; font-size: 16.500px; letter-spacing: -.1px; color: #4a4a4a; }
.search-art { margin-left: auto; margin-right: 6px; }
.pre-badge { position: absolute; left: 17px; top: 39px; width: 22px; height: 11px; background: #f5b800; border-radius: 2px; color: #222; font-size: 8.500px; font-weight: 700; line-height: 11px; text-align: center; }
.tb-help .help-q { position: absolute; left: 19px; top: 14px; font-size: 22px; line-height: 30px; font-weight: 700; color: #fff; width: 16px; text-align: center; }
.help-dot { position: absolute; left: 26px; top: 9px; width: 20px; height: 24px; border-radius: 50%; background: #ffc107; }
.tb-fb { font-family: "Liberation Sans", sans-serif; font-weight: 700; font-size: 26px; color: #fff; isolation: isolate; }
.tb-fb::before { content: ""; position: absolute; left: 12px; top: 15px; width: 30px; height: 30px; border-radius: 50%; background: linear-gradient(180deg, #1aa3f5, #0a6fe3); z-index: -1; }
.tb-dot::after { content: ""; position: absolute; left: 23px; top: 50px; width: 9px; height: 4px; border-radius: 2px; background: #8a8a8a; }
.app-badge { position: absolute; left: 28px; top: 7px; width: 20px; height: 24px; border-radius: 50%; font-size: 12px; line-height: 24px; font-weight: 700; text-align: center; color: #cfe3f8; }
.badge-blue { background: #1666b8; }
.badge-purple { background: #5c2a9d; color: #d8c8f0; }
.badge-photo { background: #4a4a4a; box-shadow: inset -3px -4px 5px #222; }
.badge-wa { left: 27px; top: 5px; width: 25px; height: 25px; background: #4cc2ff; color: #10202c; font-weight: 400; font-size: 14px; line-height: 25px; }
.dev-icon { width: 28px; height: 32px; display: flex; flex-direction: column; align-items: center; background: #1c2f7a; font-family: "Liberation Sans", sans-serif; font-weight: 700; overflow: hidden; }
.dev-top { font-size: 12px; line-height: 16px; color: #e8ecf5; }
.dev-bot { font-size: 12px; line-height: 14px; color: #3f6de0; }
.word-w { position: absolute; left: 12px; top: 21px; width: 16px; height: 18px; background: #185abd; border-radius: 1px; font-family: "Liberation Sans", sans-serif; font-size: 12px; font-weight: 700; line-height: 18px; text-align: center; color: #fff; }
.tb-paint { width: 50px; height: 50px; margin-left: 3px; border: 1px solid #313131; border-radius: 4px; background: #2b2b2b; }
.paint-bar { position: absolute; left: 15px; top: 44px; width: 20px; height: 4px; border-radius: 2px; background: #4cc2ff; }
.tray { margin-left: auto; padding-right: 18px; display: flex; align-items: center; height: 60px; font-size: 15px; }
.tray-cell { display: flex; align-items: center; justify-content: center; }
.tray-chev { width: 40px; }
.tray-cloud { width: 38px; }
.tray-lang { width: 60px; margin-right: 3px; padding-bottom: 2px; text-align: center; line-height: 19px; }
.tray-ic { width: 30px; }
.tray-clock { width: 93px; margin-right: 2px; padding-bottom: 2px; text-align: right; line-height: 19px; white-space: nowrap; }
.tray-bell { position: relative; width: 34px; }
.bell-z { position: absolute; left: 22px; top: -3px; font-size: 11px; line-height: 12px; color: #fff; }
```
